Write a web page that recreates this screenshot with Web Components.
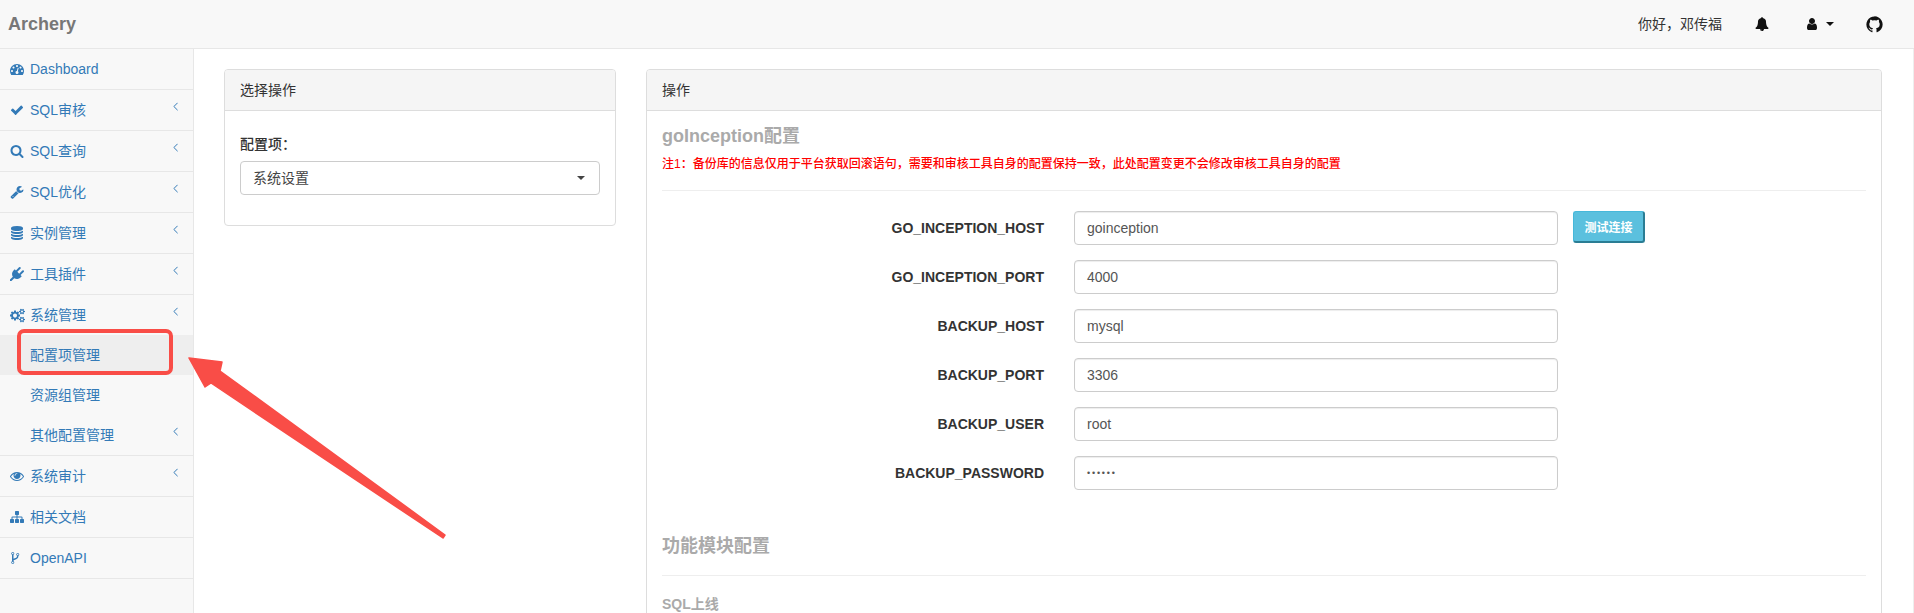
<!DOCTYPE html>
<html>
<head>
<meta charset="utf-8">
<title>Archery</title>
<style>
    html, body {
        margin: 0;
        height: 613px;
        overflow: hidden;
        background: #fff;
        font: 14px/20px "Liberation Sans", "Noto Sans CJK SC", sans-serif;
        color: #333;
    }
</style>
</head>
<body>
<archery-app>
    <top-nav slot="nav" brand="Archery" greeting="你好，邓传福"></top-nav>
    <side-menu slot="side">
        <menu-item icon="dashboard">Dashboard</menu-item>
        <menu-item icon="check" arrow>SQL审核</menu-item>
        <menu-item icon="search" arrow>SQL查询</menu-item>
        <menu-item icon="wrench" arrow>SQL优化</menu-item>
        <menu-item icon="database" arrow>实例管理</menu-item>
        <menu-item icon="plug" arrow>工具插件</menu-item>
        <menu-item icon="cogs" arrow flat>系统管理</menu-item>
        <menu-item sub active flat>配置项管理</menu-item>
        <menu-item sub flat>资源组管理</menu-item>
        <menu-item sub arrow>其他配置管理</menu-item>
        <menu-item icon="eye" arrow>系统审计</menu-item>
        <menu-item icon="sitemap">相关文档</menu-item>
        <menu-item icon="fork">OpenAPI</menu-item>
    </side-menu>
    <info-panel slot="left" heading="选择操作">
        <select-field label="配置项：" value="系统设置"></select-field>
    </info-panel>
    <info-panel slot="right" heading="操作">
        <section-title note="注1：备份库的信息仅用于平台获取回滚语句，需要和审核工具自身的配置保持一致，此处配置变更不会修改审核工具自身的配置">goInception配置</section-title>
        <form-row label="GO_INCEPTION_HOST" value="goinception" action="测试连接"></form-row>
        <form-row label="GO_INCEPTION_PORT" value="4000"></form-row>
        <form-row label="BACKUP_HOST" value="mysql"></form-row>
        <form-row label="BACKUP_PORT" value="3306"></form-row>
        <form-row label="BACKUP_USER" value="root"></form-row>
        <form-row label="BACKUP_PASSWORD" value="••••••" secret></form-row>
        <section-title spaced>功能模块配置</section-title>
        <sub-title>SQL上线</sub-title>
    </info-panel>
</archery-app>
<arrow-callout></arrow-callout>

<script>
const ICONS = {
    dashboard: 'M384 1152q0-53-37.5-90.5t-90.5-37.500-90.500 37.500-37.500 90.500 37.500 90.500 90.500 37.500 90.500-37.500 37.500-90.500zm192-448q0-53-37.500-90.500t-90.500-37.500-90.500 37.500-37.500 90.500 37.500 90.500 90.500 37.500 90.500-37.500 37.500-90.500zm428 481l101-382q6-26-7.500-48.500t-38.500-29.500-48 6.500-30 39.500l-101 382q-60 5-107 43.500t-63 98.500q-20 77 20 146t117 89 146-20 89-117q16-60-6-117t-72-91zm660-33q0-53-37.500-90.500t-90.500-37.500-90.500 37.500-37.500 90.500 37.500 90.500 90.500 37.500 90.500-37.500 37.500-90.500zm-640-640q0-53-37.500-90.500t-90.500-37.500-90.500 37.500-37.500 90.500 37.500 90.500 90.500 37.500 90.500-37.500 37.500-90.500zm448 192q0-53-37.500-90.500t-90.500-37.500-90.500 37.500-37.500 90.500 37.500 90.500 90.500 37.500 90.500-37.500 37.500-90.500zm320 448q0 261-141 483-19 29-54 29h-1402q-35 0-54-29-141-221-141-483 0-182 71-348t191-286 286-191 348-71 348 71 286 191 191 286 71 348z',
    check: 'M1671 566q0 40-28 68l-724 724-136 136q-28 28-68 28t-68-28l-136-136-362-362q-28-28-28-68t28-68l136-136q28-28 68-28t68 28l294 295 656-657q28-28 68-28t68 28l136 136q28 28 28 68z',
    search: 'M1216 832q0-185-131.500-316.500t-316.500-131.500-316.500 131.500-131.500 316.500 131.500 316.500 316.500 131.500 316.500-131.500 131.500-316.500zm512 832q0 52-38 90t-90 38q-54 0-90-38l-343-342q-179 124-399 124-143 0-273.500-55.500t-225-150-150-225-55.500-273.500 55.500-273.500 150-225 225-150 273.500-55.500 273.500 55.500 225 150 150 225 55.500 273.500q0 220-124 399l343 343q37 37 37 90z',
    wrench: 'M448 1472q0-26-19-45t-45-19-45 19-19 45 19 45 45 19 45-19 19-45zm644-420l-682 682q-37 37-90 37-52 0-91-37l-106-108q-38-36-38-90 0-53 38-91l681-681q39 98 114.500 173.500t173.500 114.500zm634-435q0 39-23 106-47 134-164.500 217.500t-258.500 83.500q-185 0-316.500-131.500t-131.500-316.500 131.500-316.500 316.500-131.500q58 0 121.500 16.500t107.500 46.500q16 11 16 28t-16 28l-293 169v224l193 107q5-3 79-48.500t135.500-81 70.500-35.500q15 0 23.500 10t8.500 25z',
    database: 'M896 768q237 0 443-43t325-127v170q0 69-103 128t-280 93.500-385 34.500-385-34.500-280-93.500-103-128v-170q119 84 325 127t443 43zm0 768q237 0 443-43t325-127v170q0 69-103 128t-280 93.500-385 34.500-385-34.500-280-93.500-103-128v-170q119 84 325 127t443 43zm0-384q237 0 443-43t325-127v170q0 69-103 128t-280 93.500-385 34.500-385-34.500-280-93.500-103-128v-170q119 84 325 127t443 43zm0-1152q208 0 385 34.500t280 93.500 103 128v128q0 69-103 128t-280 93.500-385 34.500-385-34.500-280-93.500-103-128v-128q0-69 103-128t280-93.500 385-34.500z',
    plug: 'M1755 453q37 38 37 90.500t-37 90.500l-401 400 150 150-160 160q-163 163-389.500 186.500t-411.500-100.500l-362 362h-181v-181l362-362q-124-185-100.500-411.500t186.500-389.500l160-160 150 150 400-401q38-37 91-37t90 37 37 90.500-37 90.500l-400 401 234 234 401-400q38-37 91-37t90 37z',
    cogs: 'M896 896q0-106-75-181t-181-75-181 75-75 181 75 181 181 75 181-75 75-181zm768 512q0-52-38-90t-90-38-90 38-38 90q0 53 37.500 90.500t90.500 37.500 90.500-37.500 37.500-90.500zm0-1024q0-52-38-90t-90-38-90 38-38 90q0 53 37.500 90.500t90.500 37.500 90.500-37.500 37.500-90.500zm-384 421v185q0 10-7 19.500t-16 10.500l-155 24q-11 35-32 76 34 48 90 115 7 11 7 20 0 12-7 19-23 30-82.500 89.500t-78.500 59.500q-11 0-21-7l-115-90q-37 19-77 31-11 108-23 155-7 24-30 24h-186q-11 0-20-7.500t-10-17.500l-23-153q-34-10-75-31l-118 89q-7 7-20 7-11 0-21-8-144-133-144-160 0-9 7-19 10-14 41-53t47-61q-23-44-35-82l-152-24q-10-1-17-9.500t-7-19.500v-185q0-10 7-19.500t16-10.500l155-24q11-35 32-76-34-48-90-115-7-11-7-20 0-12 7-20 22-30 82-89t79-59q11 0 21 7l115 90q34-18 77-32 11-108 23-154 7-24 30-24h186q11 0 20 7.500t10 17.500l23 153q34 10 75 31l118-89q8-7 20-7 11 0 21 8 144 133 144 160 0 8-7 19-12 16-42 54t-45 60q23 48 34 82l152 23q10 2 17 10.500t7 19.500zm640 533v140q0 16-149 31-12 27-30 52 51 113 51 138 0 4-4 7-122 71-124 71-8 0-46-47t-52-68q-20 2-30 2t-30-2q-14 21-52 68t-46 47q-2 0-124-71-4-3-4-7 0-25 51-138-18-25-30-52-149-15-149-31v-140q0-16 149-31 13-29 30-52-51-113-51-138 0-4 4-7 4-2 35-20t59-34 30-16q8 0 46 46.500t52 67.500q20-2 30-2t30 2q51-71 92-112l6-2q4 0 124 70 4 3 4 7 0 25-51 138 17 23 30 52 149 15 149 31zm0-1024v140q0 16-149 31-12 27-30 52 51 113 51 138 0 4-4 7-122 71-124 71-8 0-46-47t-52-68q-20 2-30 2t-30-2q-14 21-52 68t-46 47q-2 0-124-71-4-3-4-7 0-25 51-138-18-25-30-52-149-15-149-31v-140q0-16 149-31 13-29 30-52-51-113-51-138 0-4 4-7 4-2 35-20t59-34 30-16q8 0 46 46.500t52 67.500q20-2 30-2t30 2q51-71 92-112l6-2q4 0 124 70 4 3 4 7 0 25-51 138 17 23 30 52 149 15 149 31z',
    eye: 'M1664 960q-152-236-381-353 61 104 61 225 0 185-131.500 316.500t-316.500 131.500-316.500-131.500-131.500-316.500q0-121 61-225-229 117-381 353 133 205 333.500 326.500t434.500 121.500 434.500-121.500 333.500-326.500zm-720-384q0-20-14-34t-34-14q-125 0-214.500 89.500t-89.500 214.500q0 20 14 34t34 14 34-14 14-34q0-86 61-147t147-61q20 0 34-14t14-34zm848 384q0 34-20 69-140 230-376.500 368.500t-499.500 138.500-499.500-139-376.500-368q-20-35-20-69t20-69q140-229 376.500-368t499.500-139 499.500 139 376.500 368q20 35 20 69z',
    sitemap: 'M1792 1248v320q0 40-28 68t-68 28h-320q-40 0-68-28t-28-68v-320q0-40 28-68t68-28h96v-192h-512v192h96q40 0 68 28t28 68v320q0 40-28 68t-68 28h-320q-40 0-68-28t-28-68v-320q0-40 28-68t68-28h96v-192h-512v192h96q40 0 68 28t28 68v320q0 40-28 68t-68 28h-320q-40 0-68-28t-28-68v-320q0-40 28-68t68-28h96v-192q0-52 38-90t90-38h512v-192h-96q-40 0-68-28t-28-68v-320q0-40 28-68t68-28h320q40 0 68 28t28 68v320q0 40-28 68t-68 28h-96v192h512q52 0 90 38t38 90v192h96q40 0 68 28t28 68z',
    fork: 'M448 1472q0-40-28-68t-68-28-68 28-28 68 28 68 68 28 68-28 28-68zm0-1152q0-40-28-68t-68-28-68 28-28 68 28 68 68 28 68-28 28-68zm640 128q0-40-28-68t-68-28-68 28-28 68 28 68 68 28 68-28 28-68zm96 0q0 52-26 96.500t-70 69.500q-2 287-226 414-67 38-203 81-128 40-169.500 71t-41.500 100v26q44 25 70 69.500t26 96.500q0 80-56 136t-136 56-136-56-56-136q0-52 26-96.500t70-69.500v-820q-44-25-70-69.500t-26-96.500q0-80 56-136t136-56 136 56 56 136q0 52-26 96.500t-70 69.500v497q54-26 154-57 55-17 87.500-29.500t70.500-31 59-39.500 40.500-51 28-69.500 8.500-91.500q-44-25-70-69.500t-26-96.500q0-80 56-136t136-56 136 56 56 136z',
    bell: 'M912 1696q0-16-16-16-59 0-101.500-42.500t-42.500-101.500q0-16-16-16t-16 16q0 73 51.500 124.500t124.500 51.500q16 0 16-16zm816-288q0 52-38 90t-90 38h-448q0 106-75 181t-181 75-181-75-75-181h-448q-52 0-90-38t-38-90q50-42 91-88t85-119.500 74.500-158.500 50-206 19.500-260q0-152 117-282.500t307-158.500q-8-19-8-39 0-40 28-68t68-28 68 28 28 68q0 20-8 39 190 28 307 158.500t117 282.500q0 139 19.500 260t50 206 74.500 158.500 85 119.500 91 88z',
    user: 'M1536 1399q0 109-62.500 187t-150.500 78h-854q-88 0-150.500-78t-62.500-187q0-85 8.500-160.500t31.500-152 58.500-131 94-89 134.500-34.500q131 128 313 128t313-128q76 0 134.500 34.500t94 89 58.500 131 31.500 152 8.500 160.500zm-256-887q0 159-112.500 271.500t-271.500 112.500-271.500-112.500-112.500-271.500 112.500-271.500 271.500-112.500 271.500 112.500 112.500 271.500z',
    github: 'M896 128q209 0 385.500 103t279.500 279.500 103 385.500q0 251-146.500 451.500t-378.500 277.500q-27 5-40-7t-13-30q0-3 .5-76.500t.5-134.500q0-97-52-142 57-6 102.500-18t94-39 81-66.500 53-105 20.500-150.500q0-119-79-206 37-91-8-204-28-9-81 11t-92 44l-38 24q-93-26-192-26t-192 26q-16-11-42.500-27t-83.500-38.500-85-13.500q-45 113-8 204-79 87-79 206 0 85 20.500 150t52.500 105 80.500 67 94 39 102.500 18q-39 36-49 103-21 10-45 15t-57 5-65.500-21.500-55.500-62.500q-19-32-48.500-52t-49.500-24l-20-3q-21 0-29 4.500t-5 11.500 9 14 13 12l7 5q22 10 43.500 38t31.500 51l10 23q13 38 44 63t67 32 69.500 7 55.500-3.500l23-4q0 38 .5 88.500t.5 54.500q0 18-13 30t-40 7q-232-77-378.500-277.500t-146.500-451.500q0-209 103-385.500t279.500-279.500 385.500-103z'
};

function icon(name, size) {
    const w = name === 'cogs' ? 1920 : 1792;
    return `<svg width="${size}" height="${size}" viewBox="0 0 ${w} 1792" fill="currentColor"><path d="${ICONS[name]}"/></svg>`;
}

class ShadowBase extends HTMLElement {
    connectedCallback() {
        if (!this.shadowRoot) {
            this.attachShadow({ mode: 'open' });
        }
        this.render();
    }
}

class ArcheryApp extends ShadowBase {
    render() {
        this.shadowRoot.innerHTML = `
        <style>
            :host { display: flex; flex-direction: column; height: 613px; }
            .body { flex: 1; display: flex; min-height: 0; }
            main {
                flex: 1;
                display: grid;
                grid-template-columns: 392px 1fr;
                column-gap: 30px;
                align-items: start;
                padding: 20px 31px 0 30px;
                border-right: 1px solid #eee;
                overflow: hidden;
            }
        </style>
        <slot name="nav"></slot>
        <div class="body">
            <slot name="side"></slot>
            <main>
                <slot name="left"></slot>
                <slot name="right"></slot>
            </main>
        </div>`;
    }
}

class TopNav extends ShadowBase {
    render() {
        this.shadowRoot.innerHTML = `
        <style>
            :host {
                display: flex;
                align-items: center;
                height: 48px;
                background: #f8f8f8;
                border-bottom: 1px solid #e7e7e7;
                padding: 0 30px 0 8px;
            }
            .brand { font-size: 18px; font-weight: bold; color: #777; flex: 1; }
            .hello { color: #333; font-size: 14px; }
            svg { display: block; color: #111; }
            .bell { margin-left: 33px; }
            .user { margin-left: 36px; }
            .caret {
                margin-left: 7px;
                border-top: 4px solid #111;
                border-left: 4px solid transparent;
                border-right: 4px solid transparent;
            }
            .git { margin-left: 31px; }
        </style>
        <span class="brand">${this.getAttribute('brand')}</span>
        <span class="hello">${this.getAttribute('greeting')}</span>
        <span class="bell">${icon('bell', 14)}</span>
        <span class="user">${icon('user', 14)}</span>
        <span class="caret"></span>
        <span class="git">${icon('github', 19)}</span>`;
    }
}

class SideMenu extends ShadowBase {
    render() {
        this.shadowRoot.innerHTML = `
        <style>
            :host {
                display: flex;
                flex-direction: column;
                width: 193px;
                flex: none;
                background: #f8f8f8;
                border-right: 1px solid #e7e7e7;
            }
        </style>
        <slot></slot>`;
    }
}

class MenuItem extends ShadowBase {
    render() {
        const name = this.getAttribute('icon');
        this.shadowRoot.innerHTML = `
        <style>
            :host {
                display: flex;
                align-items: center;
                height: 40px;
                padding-left: 10px;
                padding-right: 15px;
                gap: 6px;
                color: #337ab7;
                font-size: 14px;
                border-bottom: 1px solid #e7e7e7;
            }
            :host([flat]) { border-bottom: 0; }
            :host([active]) { background: #eee; }
            :host([sub]) { padding-left: 30px; }
            .ico { width: 14px; height: 14px; display: flex; justify-content: center; }
            svg { display: block; flex: none; }
            .text { flex: 1; }
            .chev { margin-top: -7px; }
        </style>
        ${name ? `<span class="ico">${icon(name, name === 'cogs' ? 15 : 14)}</span>` : ''}
        <span class="text"><slot></slot></span>
        ${this.hasAttribute('arrow') ? `<svg class="chev" width="5" height="9" viewBox="0 0 5 9"><polyline points="4.6,.8 .9,4.5 4.6,8.2" fill="none" stroke="currentColor" stroke-width="1"/></svg>` : ''}`;
    }
}

class InfoPanel extends ShadowBase {
    render() {
        this.shadowRoot.innerHTML = `
        <style>
            :host {
                display: block;
                background: #fff;
                border: 1px solid #ddd;
                border-radius: 4px;
            }
            .head {
                height: 40px;
                line-height: 40px;
                padding: 0 15px;
                background: #f5f5f5;
                border-bottom: 1px solid #ddd;
                border-radius: 3px 3px 0 0;
                color: #333;
            }
            .body { padding: 15px; }
        </style>
        <div class="head">${this.getAttribute('heading')}</div>
        <div class="body"><slot></slot></div>`;
    }
}

class SelectField extends ShadowBase {
    render() {
        this.shadowRoot.innerHTML = `
        <style>
            :host { display: block; padding: 8px 0 15px; }
            label { display: block; font-weight: 500; color: #333; margin-bottom: 7px; }
            .box {
                display: flex;
                align-items: center;
                justify-content: space-between;
                height: 32px;
                padding: 0 14px 0 12px;
                border: 1px solid #ccc;
                border-radius: 4px;
                color: #444;
            }
            .caret {
                border-top: 4px solid #444;
                border-left: 4px solid transparent;
                border-right: 4px solid transparent;
            }
        </style>
        <label>${this.getAttribute('label')}</label>
        <div class="box"><span>${this.getAttribute('value')}</span><span class="caret"></span></div>`;
    }
}

class SectionTitle extends ShadowBase {
    render() {
        const note = this.getAttribute('note');
        this.shadowRoot.innerHTML = `
        <style>
            :host {
                display: block;
                margin-bottom: 20px;
                padding-bottom: 17px;
                border-bottom: 1px solid #eee;
            }
            :host([spaced]) { margin-top: 46px; padding-bottom: 19px; }
            h3 { margin: 0; font-size: 18px; line-height: 20px; font-weight: bold; color: #aaa; }
            p { margin: 10px 0 0; font-size: 12px; line-height: 17px; font-weight: 500; color: #f00; }
        </style>
        <h3><slot></slot></h3>
        ${note ? `<p>${note}</p>` : ''}`;
    }
}

class SubTitle extends ShadowBase {
    render() {
        this.shadowRoot.innerHTML = `
        <style>
            :host { display: block; font-size: 14px; line-height: 16px; font-weight: bold; color: #aaa; }
        </style>
        <slot></slot>`;
    }
}

class FormRow extends ShadowBase {
    render() {
        const action = this.getAttribute('action');
        this.shadowRoot.innerHTML = `
        <style>
            :host {
                display: grid;
                grid-template-columns: 382px 484px auto;
                column-gap: 30px;
                align-items: start;
                height: 34px;
                margin-bottom: 15px;
            }
            label {
                text-align: right;
                font-weight: bold;
                color: #333;
                line-height: 34px;
            }
            .input {
                height: 32px;
                line-height: 32px;
                padding: 0 12px;
                border: 1px solid #ccc;
                border-radius: 4px;
                box-shadow: inset 0 1px 1px rgba(0, 0, 0, 0.075);
                color: #555;
            }
            :host([secret]) .input { font-size: 9px; letter-spacing: 1.8px; }
            button {
                justify-self: start;
                margin-left: -15px;
                width: 72px;
                height: 32px;
                padding: 0;
                font: bold 12px "Liberation Sans", "Noto Sans CJK SC", sans-serif;
                color: #fff;
                background: #5bc0de;
                border: 1px solid #46b8da;
                border-right: 2px solid #2a7d94;
                border-bottom: 2px solid #2a7d94;
                border-radius: 3px;
            }
        </style>
        <label>${this.getAttribute('label')}</label>
        <div class="input">${this.getAttribute('value')}</div>
        ${action ? `<button>${action}</button>` : ''}`;
    }
}

class ArrowCallout extends ShadowBase {
    render() {
        this.shadowRoot.innerHTML = `
        <style>
            :host { position: absolute; left: 0; top: 0; pointer-events: none; }
            svg { display: block; }
        </style>
        <svg width="1914" height="613" viewBox="0 0 1914 613">
            <rect x="19" y="331" width="152" height="42" rx="5" fill="none" stroke="#f94d47" stroke-width="4"/>
            <polygon points="189,358 222,362 220,371 445,535 443,538 211,383 205,387" fill="#f94d47" stroke="#f94d47" stroke-width="1.5" stroke-linejoin="round"/>
        </svg>`;
    }
}

customElements.define('archery-app', ArcheryApp);
customElements.define('top-nav', TopNav);
customElements.define('side-menu', SideMenu);
customElements.define('menu-item', MenuItem);
customElements.define('info-panel', InfoPanel);
customElements.define('select-field', SelectField);
customElements.define('section-title', SectionTitle);
customElements.define('sub-title', SubTitle);
customElements.define('form-row', FormRow);
customElements.define('arrow-callout', ArrowCallout);
</script>
</body>
</html>
